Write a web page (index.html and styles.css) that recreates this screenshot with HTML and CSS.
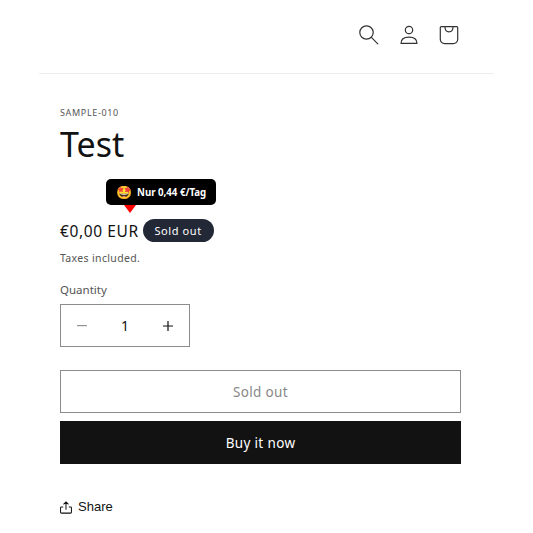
FILE: index.html
```html
<!DOCTYPE html>
<html lang="de">
<head>
<meta charset="utf-8">
<title>Test</title>
<link rel="stylesheet" href="styles.css">
</head>
<body>
<header class="header">
    <div class="header-icons">
        <a class="icon-link">
            <svg width="20" height="20" viewBox="0 0 20 20" fill="none" stroke="#333" stroke-width="1.200"><circle cx="7.500" cy="7.500" r="6.700"/><path d="M12.400 12.400l6.400 6.400" stroke-linecap="round"/></svg>
        </a>
        <a class="icon-link">
            <svg width="18" height="20" viewBox="0 0 18 20" fill="none" stroke="#333" stroke-width="1.200"><circle cx="9" cy="5" r="3.700"/><path d="M1 18.400c0-4 3.200-6.300 8-6.300s8 2.300 8 6.300z" stroke-linejoin="round"/></svg>
        </a>
        <a class="icon-link">
            <svg width="20" height="20" viewBox="0 0 20 20" fill="none" stroke="#333" stroke-width="1.200"><path d="M2.200 1.700h15.600c.5 0 .9.400.9 1v11.600c0 2.500-1.900 4.300-4.400 4.300H5.700c-2.500 0-4.400-1.800-4.400-4.300V2.700c0-.6.400-1 .9-1z"/><path d="M6 2c0 3 1.500 4.800 4 4.800s4-1.800 4-4.800"/></svg>
        </a>
    </div>
</header>

<main class="product">
    <p class="sku">SAMPLE-010</p>
    <h1 class="title">Test</h1>

    <div class="promo-wrap">
        <div class="promo">
            <span class="promo-emoji">🤩</span>
            <span class="promo-text">Nur 0,44 €/Tag</span>
            <span class="promo-arrow"></span>
        </div>
    </div>

    <div class="price-row">
        <span class="price">€0,00 EUR</span>
        <span class="badge">Sold out</span>
    </div>
    <p class="tax">Taxes included.</p>

    <label class="qty-label">Quantity</label>
    <div class="qty">
        <span class="qty-btn qty-btn-off">
            <svg width="10" height="2" viewBox="0 0 10 2"><rect width="10" height="1.200" fill="#121212"/></svg>
        </span>
        <span class="qty-val">1</span>
        <span class="qty-btn">
            <svg width="10" height="10" viewBox="0 0 10 10"><path d="M0 5h10M5 0v10" stroke="#121212" stroke-width="1.200"/></svg>
        </span>
    </div>

    <button class="btn btn-sold">Sold out</button>
    <button class="btn btn-buy">Buy it now</button>

    <a class="share">
        <svg width="12" height="13" viewBox="0 0 13 14" fill="none" stroke="#121212" stroke-width="1.100"><path d="M6.500 9.500V1M3.800 3.500L6.500 .9l2.700 2.600M3.500 6.500H1.500c-.5 0-.9.400-.9.900v4.700c0 .6.400 1 .9 1h10c.5 0 .9-.4.900-1V7.400c0-.5-.4-.9-.9-.9h-2"/></svg>
        <span>Share</span>
    </a>
</main>
</body>
</html>
```

FILE: styles.css
```css
* {
    box-sizing: border-box;
}
body {
    margin: 0;
    background: #fff;
    color: #121212;
    font-family: "Noto Sans", "Open Sans", sans-serif;
}
.header {
    margin: 0 39px;
    height: 74px;
    border-bottom: 1px solid #ededed;
    display: flex;
    justify-content: flex-end;
    padding: 13px 25px 0 0;
}
.header-icons {
    display: flex;
}
.icon-link {
    width: 40px;
    height: 44px;
    display: flex;
    align-items: center;
    justify-content: center;
}
.product {
    padding: 33px 72px 0 60px;
}
.sku {
    margin: 0;
    font-size: 9px;
    line-height: 12px;
    letter-spacing: .65px;
    color: #555;
}
.title {
    margin: 3px 0 0;
    font-size: 34px;
    line-height: 44px;
    font-weight: 400;
}
.promo-wrap {
    margin: 13px 0 0 46px;
    display: flex;
}
.promo {
    position: relative;
    width: 110px;
    height: 26px;
    background: #000;
    border-radius: 5px;
    color: #fff;
    display: flex;
    align-items: center;
    gap: 5px;
    padding-left: 10px;
}
.promo-emoji {
    font-size: 13px;
    line-height: 1;
}
.promo-text {
    font-size: 9.700px;
    font-weight: 700;
    white-space: nowrap;
}
.promo-arrow {
    position: absolute;
    left: 18px;
    top: 26px;
    border-left: 6px solid transparent;
    border-right: 6px solid transparent;
    border-top: 8px solid #f00;
}
.price-row {
    margin-top: 13px;
    display: flex;
    align-items: center;
    gap: 4px;
}
.price {
    font-size: 15.500px;
    line-height: 24px;
    letter-spacing: .6px;
    position: relative;
    top: 1px;
}
.badge {
    width: 71px;
    height: 23px;
    border-radius: 12px;
    background: #232837;
    color: #fff;
    font-size: 11px;
    letter-spacing: .6px;
    display: flex;
    align-items: center;
    justify-content: center;
}
.tax {
    margin: 8px 0 0;
    font-size: 10.500px;
    line-height: 16px;
    letter-spacing: .35px;
    color: #555;
}
.qty-label {
    display: block;
    margin-top: 16px;
    font-size: 11.500px;
    line-height: 16px;
    letter-spacing: 0;
    color: #555;
}
.qty {
    margin-top: 6px;
    width: 130px;
    height: 43px;
    border: 1px solid #8c8c8c;
    display: flex;
    align-items: center;
    justify-content: space-between;
    padding: 0 16px;
}
.qty-btn {
    display: flex;
}
.qty-btn-off {
    opacity: .45;
}
.qty-val {
    font-size: 14px;
}
.btn {
    display: block;
    width: 401px;
    height: 43px;
    font-family: inherit;
    font-size: 13.500px;
    letter-spacing: .35px;
    border-radius: 0;
    padding: 0;
}
.btn-sold {
    margin-top: 23px;
    background: #fff;
    border: 1px solid #8c8c8c;
    color: #888;
}
.btn-buy {
    margin-top: 8px;
    background: #121212;
    border: 0;
    color: #fff;
}
.share {
    margin-top: 34px;
    display: flex;
    align-items: center;
    gap: 6px;
    font-family: "Liberation Sans", Arial, sans-serif;
    font-size: 13px;
    line-height: 18px;
}
```
